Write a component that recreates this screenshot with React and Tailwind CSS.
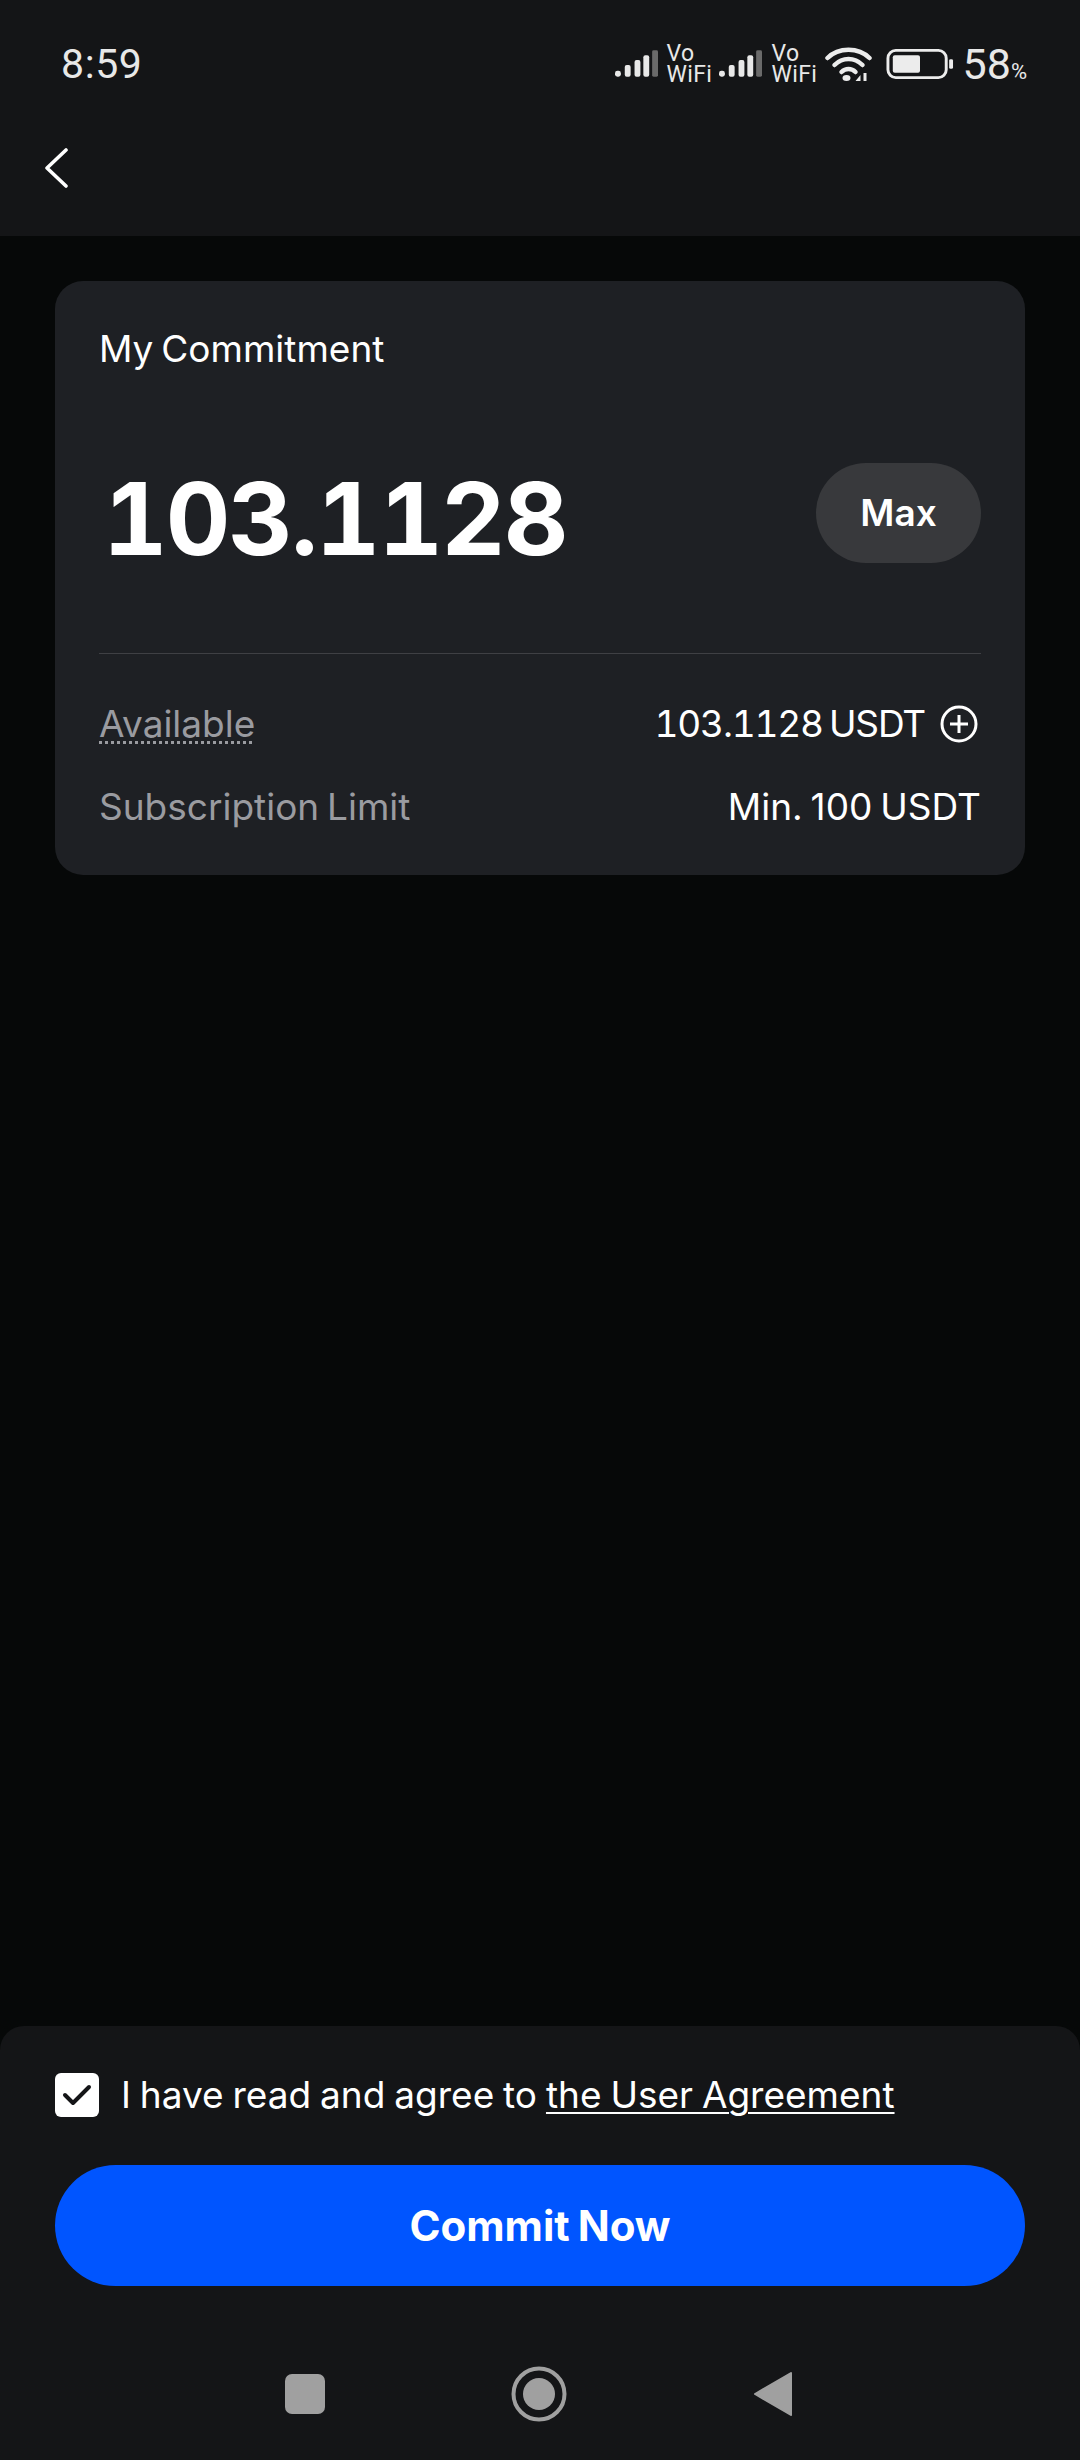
import React from "react";

function Signal() {
  return (
    <svg width="43" height="30" viewBox="0 0 44 30" className="block">
      <rect x="0" y="22" width="6" height="6" rx="2.5" fill="#e8e8e8" />
      <rect x="10" y="16" width="6" height="12" rx="2" fill="#e8e8e8" />
      <rect x="20" y="11" width="6" height="17" rx="2" fill="#e8e8e8" />
      <rect x="29" y="6" width="6" height="22" rx="2" fill="#e8e8e8" />
      <rect x="38" y="1" width="6" height="27" rx="1.5" fill="#6a6a6a" />
    </svg>
  );
}

function VoWifi() {
  return (
    <span className="block w-[43px] font-['Roboto',sans-serif] text-[#e8e8e8] text-[23px] leading-[21px] tracking-[0.3px]">
      Vo WiFi
    </span>
  );
}

export default function App() {
  return (
    <div className="h-[2460px] w-[1080px] flex flex-col bg-[#060808] font-['Inter',sans-serif] text-white overflow-hidden">
      <header className="h-[236px] shrink-0 bg-[#141517]">
        <div className="h-[128px] flex items-start justify-between pl-[61px] pr-[53px] pt-[41px]">
          <span className="font-['Roboto',sans-serif] text-[41px] leading-[46px] text-[#e8e8e8] tracking-[0.6px]">8:59</span>
          <div className="flex items-center h-[46px]">
            <Signal />
            <div className="ml-[9px]"><VoWifi /></div>
            <div className="ml-[9px]"><Signal /></div>
            <div className="ml-[10px]"><VoWifi /></div>
            <svg width="47" height="36" viewBox="0 0 46 36" className="ml-[10px] block">
              <g fill="none" stroke="#ececec" strokeWidth="4.5" strokeLinecap="round">
                <path d="M2 12C13 1 33 1 44 12" />
                <path d="M9 19C17 11 29 11 37 19" />
                <path d="M16 26C20 22 26 22 30 26" />
              </g>
              <ellipse cx="21" cy="32" rx="4" ry="3" fill="#ececec" />
              <path d="M30 35L35 29V35Z M38 27H41V35H38Z" fill="#ececec" />
            </svg>
            <svg width="68" height="32" viewBox="0 0 70 32" className="ml-[14px] block">
              <rect x="2" y="2" width="60" height="28" rx="8" fill="none" stroke="#ececec" strokeWidth="3" />
              <rect x="7" y="7" width="28" height="18" rx="2" fill="#ececec" />
              <rect x="65" y="11" width="4" height="10" rx="1.5" fill="#ececec" />
            </svg>
            <span className="ml-[9px] font-['Roboto',sans-serif] text-[#e8e8e8] text-[43px] leading-[46px] flex items-baseline">
              58<span className="text-[22px] leading-none">%</span>
            </span>
          </div>
        </div>
        <div className="pl-[44px] pt-[19px]">
          <svg width="24" height="42" viewBox="0 0 24 42" className="block">
            <path d="M22 3L3 21L22 39" fill="none" stroke="#ffffff" strokeWidth="3.6" strokeLinecap="round" strokeLinejoin="round" />
          </svg>
        </div>
      </header>

      <main className="flex-1 px-[55px] pt-[45px]">
        <section className="h-[594px] rounded-[28px] bg-[#1e2024] px-[44px] pt-[46px] text-[37px] leading-[44px] [word-spacing:-2.5px]">
          <h2 className="font-normal">My Commitment</h2>
          <div className="flex items-start justify-between mt-[92px] h-[100px]">
            <span className="mt-[6px] text-[100px] leading-[100px] font-bold pl-[4px] tabular-nums tracking-[-2px]">103.1128</span>
            <button className="h-[100px] w-[165px] rounded-full bg-[#38393c] font-semibold">Max</button>
          </div>
          <div className="h-px bg-[#3f4044] mt-[90px]" />
          <div className="flex items-center justify-between mt-[48px] h-[44px]">
            <span className="text-[#9a9ba0] underline decoration-dotted decoration-[3px] underline-offset-4">Available</span>
            <span className="flex items-center tabular-nums">
              <span className="tracking-[-1.2px]">103.1128 USDT</span>
              <svg width="38" height="38" viewBox="0 0 38 38" className="ml-[15px] mr-[3px] block">
                <circle cx="19" cy="19" r="17" fill="none" stroke="#fff" strokeWidth="3" />
                <path d="M19 10V28M10 19H28" stroke="#fff" strokeWidth="3" />
              </svg>
            </span>
          </div>
          <div className="flex items-center justify-between mt-[39px] h-[44px]">
            <span className="text-[#9a9ba0]">Subscription Limit</span>
            <span>Min. 100 USDT</span>
          </div>
        </section>
      </main>

      <footer className="h-[434px] shrink-0 rounded-t-[24px] bg-[#141517] px-[55px] pt-[46px]">
        <div className="flex items-center h-[46px]">
          <span className="w-[44px] h-[44px] rounded-[6px] bg-white flex items-center justify-center shrink-0">
            <svg width="30" height="24" viewBox="0 0 30 24" className="block">
              <path d="M3 12L11 20L27 4" fill="none" stroke="#141517" strokeWidth="4" strokeLinecap="round" strokeLinejoin="round" />
            </svg>
          </span>
          <p className="ml-[22px] text-[37px] leading-[46px] whitespace-nowrap [word-spacing:-1.5px]">
            I have read and agree to <span className="underline decoration-2 underline-offset-4">the User Agreement</span>
          </p>
        </div>
        <button className="mt-[47px] h-[121px] w-full rounded-full bg-[#0055ff] text-[42px] font-bold [word-spacing:-2px]">Commit Now</button>
        <nav className="mt-[78px] flex items-center h-[60px] pl-[230px]">
          <span className="w-[40px] h-[40px] rounded-[7px] bg-[#a0a0a0]" />
          <svg width="56" height="56" viewBox="0 0 56 56" className="ml-[186px] block">
            <circle cx="28" cy="28" r="25.5" fill="none" stroke="#a0a0a0" strokeWidth="4" />
            <circle cx="28" cy="28" r="16" fill="#a0a0a0" />
          </svg>
          <svg width="40" height="48" viewBox="0 0 40 48" className="ml-[186px] block">
            <path d="M38 3L2 24L38 45Z" fill="#a0a0a0" stroke="#a0a0a0" strokeWidth="2" strokeLinejoin="round" />
          </svg>
        </nav>
      </footer>
    </div>
  );
}
